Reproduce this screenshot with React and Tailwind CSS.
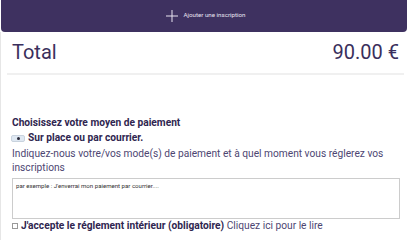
import React from 'react';

const App = () => {
    return (
        <div className="w-[410px] h-[240px] overflow-hidden bg-white font-['Roboto','Liberation_Sans',sans-serif]">
            <div className="ml-px w-[406px] h-8 bg-[#3e3160] rounded-b-[4px] flex items-center justify-center gap-[6px] pl-[3px]">
                <svg width="12" height="12" viewBox="0 0 12 12" className="text-[#e8e4f0]">
                    <path d="M6 0v12M0 6h12" stroke="currentColor" strokeWidth="1" />
                </svg>
                <span className="text-[6.2px] text-[#e8e4f0]">Ajouter une inscription</span>
            </div>
            <div className="border-l border-[#e6e6e6] h-[208px]">
                <div className="flex justify-between items-start pt-[10px] pl-[11px] pr-[11px] text-[20px] leading-none text-[#3a2f5c]">
                    <span>Total</span>
                    <span>90.00 €</span>
                </div>
                <div className="mt-[11px] mx-[6px] h-[2px] bg-[#f0f0f0]" />
                <div className="pl-[10px] pr-[10px] pt-[41px]">
                    <p className="pl-px text-[10.2px] leading-[14px] font-bold text-[#2f2650]">Choisissez votre moyen de paiement</p>
                    <label className="mt-px flex items-center gap-[3px] text-[10.2px] leading-[14px] font-bold text-[#2f2650]">
                        <span className="w-[14px] h-[7px] rounded-[2px] bg-[#dfe8f2] border border-[#c9d3de] flex items-center justify-center">
                            <span className="w-[3px] h-[3px] rounded-full bg-[#2a2a3a]" />
                        </span>
                        Sur place ou par courrier.
                    </label>
                    <p className="mt-[2px] pl-px text-[10.2px] leading-[14px] text-[#4d4672]">
                        Indiquez-nous votre/vos mode(s) de paiement et à quel moment vous réglerez vos inscriptions
                    </p>
                    <textarea
                        className="mt-[3px] ml-px block w-[388px] h-[41px] border border-[#cccccc] px-[3px] py-[2px] text-[6.1px] leading-[10px] resize-none placeholder:text-[#333]"
                        placeholder="par exemple : J'enverrai mon paiement par courrier...."
                    />
                    <label className="flex items-center gap-[3px] pl-px text-[10.2px] leading-[14px] text-[#4d4672]">
                        <span className="w-[6px] h-[6px] border border-[#999] bg-white" />
                        <span>
                            <span className="font-bold text-[#2f2650]">J'accepte le réglement intérieur (obligatoire)</span> Cliquez ici pour le lire
                        </span>
                    </label>
                </div>
            </div>
        </div>
    );
};

export default App;
